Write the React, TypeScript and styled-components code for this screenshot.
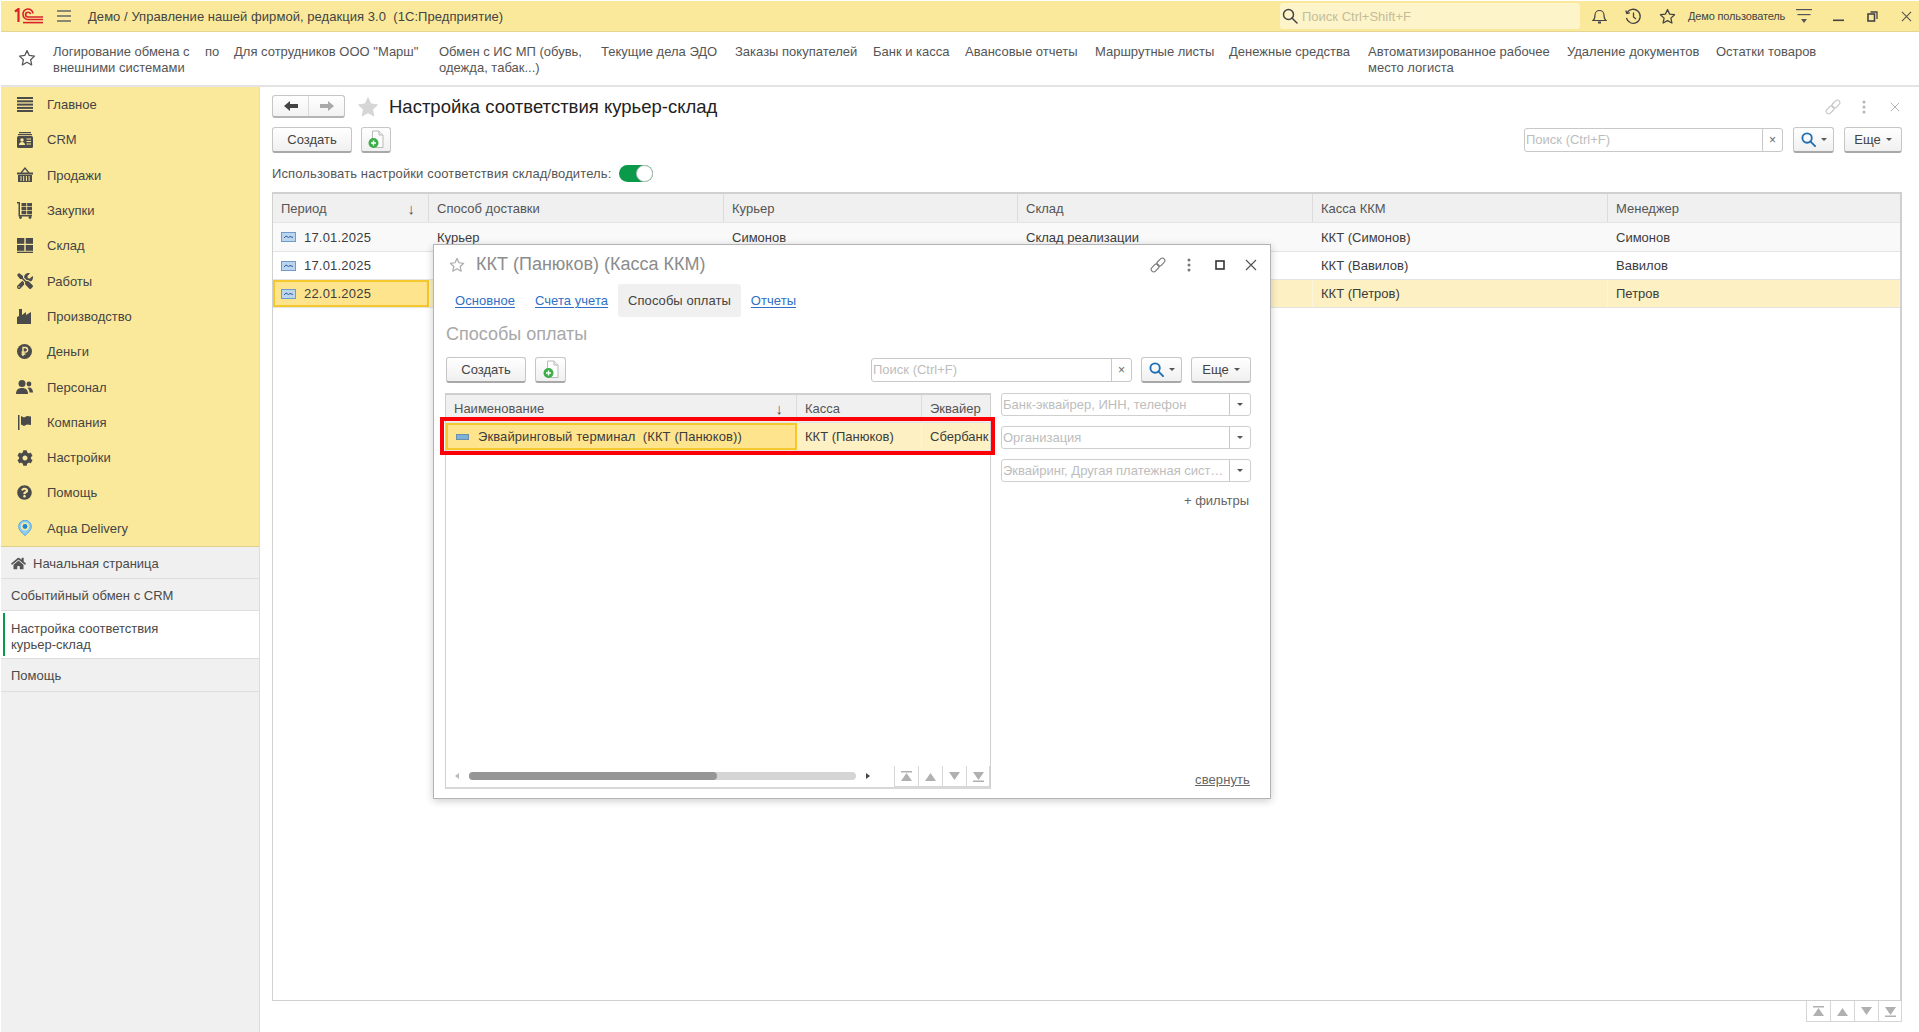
import React from 'react';
import styled, { createGlobalStyle } from 'styled-components';
import { FaCog, FaHome, FaQuestionCircle, FaTools } from 'react-icons/fa';

const Global = createGlobalStyle`
  html, body { margin: 0; padding: 0; height: 100%; background: #fff; overflow: hidden; }
  body { font-family: "Liberation Sans", Arial, sans-serif; font-size: 13px; color: #444; }
  * { box-sizing: border-box; }
`;

const Page = styled.div`
  position: relative;
  display: flex;
  flex-direction: column;
  height: 100vh;
  padding: 1px 0 0 1px;
  overflow: hidden;
`;

const TitleBar = styled.div`
  display: flex;
  align-items: center;
  flex: none;
  height: 31px;
  background: #fbe99b;
  border-bottom: 1px solid #e3d592;
  padding-left: 13px;
`;

const Logo = styled.svg`
  width: 30px;
  height: 16px;
  flex: none;
`;

const Burger = styled.svg`
  width: 14px;
  height: 12px;
  margin: 0 17px 0 13px;
  flex: none;
`;

const AppName = styled.div`
  color: #444;
  white-space: pre;
  letter-spacing: 0.05px;
  flex: 1;
`;

const GlobalSearch = styled.div`
  display: flex;
  align-items: center;
  gap: 4px;
  width: 300px;
  height: 26px;
  padding-left: 2px;
  background: #fdf4c9;
  border-radius: 3px;
  color: #c4bd9a;
  margin-right: 2px;
`;

const BarIcons = styled.div`
  display: flex;
  align-items: center;
  flex: none;
  margin-right: -4px;
  color: #444;
`;

const BarIcon = styled.span`
  display: flex;
  justify-content: center;
  width: 34px;
`;

const UserName = styled.span`
  font-size: 11px;
  letter-spacing: -0.15px;
  width: 103px;
  padding-left: 4px;
  white-space: nowrap;
`;

const QuickBar = styled.div`
  display: flex;
  align-items: flex-start;
  flex: none;
  height: 55px;
  gap: 14px;
  padding: 12px 0 0 17px;
  border-bottom: 2px solid #e4e4e4;
`;

const QuickStar = styled.svg`
  width: 18px;
  height: 18px;
  margin: 5px 3px 0 0;
  flex: none;
`;

const QuickLink = styled.div<{ $w?: number; $wrap?: boolean }>`
  flex: none;
  line-height: 15.5px;
  color: #555;
  width: ${(p) => (p.$w ? `${p.$w}px` : 'auto')};
  white-space: ${(p) => (p.$wrap ? 'normal' : 'nowrap')};
`;

const Body = styled.div`
  display: flex;
  flex: 1;
  min-height: 0;
`;

const Sidebar = styled.nav`
  display: flex;
  flex-direction: column;
  flex: none;
  width: 259px;
  background: #f0f0f0;
  border-right: 1px solid #dcdcdc;
`;

const Sections = styled.div`
  background: #fbe99b;
  border-bottom: 1px solid #ddcf8c;
`;

const SectionItem = styled.div`
  display: flex;
  align-items: center;
  height: 35.3px;
  padding-left: 15px;
  color: #444;
`;

const SectionIcon = styled.span`
  display: flex;
  justify-content: center;
  width: 17px;
  margin-right: 14px;
  color: #4b4b4b;
`;

const OpenItem = styled.div<{ $active?: boolean }>`
  position: relative;
  display: flex;
  align-items: center;
  gap: 7px;
  min-height: 32.3px;
  padding: ${(p) => (p.$active ? '10px 60px 5px 10px' : '2px 10px 0')};
  line-height: 16px;
  background: ${(p) => (p.$active ? '#fff' : 'transparent')};
  border-bottom: 1px solid #dedede;
  color: #4a4a4a;
`;

const ActiveMark = styled.i`
  position: absolute;
  left: 2px;
  top: 2px;
  bottom: 2px;
  width: 2px;
  background: #0a9a4a;
`;

const Content = styled.main`
  display: flex;
  flex-direction: column;
  flex: 1;
  min-width: 0;
  padding: 8px 17px 10px 12px;
`;

const HeaderRow = styled.div`
  display: flex;
  align-items: center;
  height: 23px;
  margin-bottom: 9px;
`;

const NavGroup = styled.div`
  display: flex;
  width: 73px;
  height: 23px;
  border: 1px solid #c6c6c6;
  border-bottom: 2px solid #b4b4b4;
  border-radius: 3px;
  background: linear-gradient(#fff, #f2f2f2);
`;

const NavCell = styled.span<{ $first?: boolean }>`
  display: flex;
  flex: 1;
  align-items: center;
  justify-content: center;
  border-right: ${(p) => (p.$first ? '1px solid #dadada' : 'none')};
`;

const BigStar = styled.svg`
  width: 24px;
  height: 24px;
  margin-left: 11px;
  flex: none;
`;

const PageTitle = styled.h1`
  margin: 0 0 0 9px;
  font-size: 18.5px;
  font-weight: 400;
  color: #222;
  flex: 1;
`;

const ToolGroup = styled.div<{ $mr: number }>`
  display: flex;
  align-items: center;
  margin-right: ${(p) => p.$mr}px;
`;

const ToolCell = styled.span`
  display: flex;
  align-items: center;
  justify-content: center;
  width: 31px;
`;

const Toolbar = styled.div`
  display: flex;
  align-items: center;
  height: 26px;
`;

const Button = styled.button<{ $w: number; $ml?: number }>`
  display: flex;
  align-items: center;
  justify-content: center;
  gap: 5px;
  flex: none;
  width: ${(p) => p.$w}px;
  height: 26px;
  margin-left: ${(p) => p.$ml ?? 0}px;
  padding: 0;
  font: inherit;
  color: #444;
  background: linear-gradient(#fff, #f0f0f0);
  border: 1px solid #c6c6c6;
  border-bottom: 2px solid #a8a8a8;
  border-radius: 3px;
`;

const Caret = styled.i`
  width: 0;
  height: 0;
  border-left: 3px solid transparent;
  border-right: 3px solid transparent;
  border-top: 3px solid #555;
`;

const SearchField = styled.div<{ $w: number }>`
  display: flex;
  width: ${(p) => p.$w}px;
  height: 24px;
  flex: none;
  margin-left: auto;
  background: #fff;
  border: 1px solid #c8c8c8;
  border-radius: 3px;
`;

const Placeholder = styled.span`
  flex: 1;
  min-width: 0;
  padding-left: 1px;
  line-height: 22px;
  color: #bdbdbd;
  white-space: nowrap;
  overflow: hidden;
  text-overflow: ellipsis;
`;

const FieldButton = styled.span<{ $w: number }>`
  display: flex;
  align-items: center;
  justify-content: center;
  flex: none;
  width: ${(p) => p.$w}px;
  border-left: 1px solid #c8c8c8;
  color: #666;
  font-size: 12px;
`;

const SwitchRow = styled.div`
  display: flex;
  align-items: center;
  gap: 8px;
  height: 18px;
  margin: 11px 0 10px;
  color: #555;
  letter-spacing: 0.12px;
`;

const Toggle = styled.span`
  position: relative;
  display: block;
  width: 34px;
  height: 17px;
  border-radius: 9px;
  background: #0a9a4a;
`;

const ToggleKnob = styled.i`
  position: absolute;
  right: 0;
  top: 0;
  width: 17px;
  height: 17px;
  border-radius: 50%;
  background: #fff;
  border: 1px solid #bcbcbc;
`;

const TableBox = styled.div`
  display: flex;
  flex-direction: column;
  flex: 1;
  min-height: 0;
  border: 1px solid #d0d0d0;
  border-top-width: 2px;
  border-left-width: 1px;
  border-right-width: 2px;
`;

const MAIN_COLUMNS = '156px 295px 294px 295px 295px 1fr';
const MODAL_COLUMNS = '351px 125px 1fr';

const Row = styled.div<{ $cols: string; $h: number; $bg?: string }>`
  display: grid;
  grid-template-columns: ${(p) => p.$cols};
  flex: none;
  height: ${(p) => p.$h}px;
  background: ${(p) => p.$bg ?? '#fff'};
  border-bottom: 1px solid #e4e4e4;
`;

const HeadCell = styled.div`
  display: flex;
  align-items: center;
  justify-content: space-between;
  padding: 0 8px;
  color: #555;
  background: #f0f0f0;
  border-right: 1px solid #dcdcdc;
  overflow: hidden;
  &:last-child { border-right: 0; }
`;

const SortArrow = styled.span`
  font-size: 15px;
  margin-right: 5px;
`;

const Cell = styled.div<{ $selected?: boolean; $line?: boolean }>`
  display: flex;
  align-items: center;
  gap: 8px;
  padding: 0 ${(p) => (p.$selected ? 6 : 8)}px;
  color: #3c3c3c;
  white-space: pre;
  overflow: hidden;
  background: ${(p) => (p.$selected ? '#ffe48e' : 'transparent')};
  border: ${(p) => (p.$selected ? '2px solid #f5c92e' : 'none')};
  border-right: ${(p) => (p.$selected ? '2px solid #f5c92e' : p.$line ? '1px solid #fbf5dc' : 'none')};
`;

const DateText = styled.span`
  letter-spacing: 0.2px;
`;

const NameText = styled.span`
  letter-spacing: 0.1px;
`;

const Spacer = styled.div`
  flex: 1;
`;

const Pager = styled.div`
  display: flex;
  flex: none;
`;

const PagerCell = styled.span`
  display: flex;
  align-items: center;
  justify-content: center;
  width: 24px;
  height: 21px;
  border: 1px solid #d6d6d6;
  border-right-width: 0;
  border-top-width: 0;
  &:last-child { border-right-width: 1px; }
`;

const BottomPager = styled.div`
  display: flex;
  justify-content: flex-end;
`;

/* modal */
const Window = styled.section`
  position: absolute;
  left: 433px;
  top: 244px;
  width: 838px;
  height: 555px;
  display: flex;
  flex-direction: column;
  padding: 0 19px 0 12px;
  background: #fff;
  border: 1px solid #b4b4b4;
  box-shadow: 0 2px 8px rgba(0, 0, 0, 0.2);
`;

const WindowHead = styled.div`
  display: flex;
  align-items: center;
  height: 39px;
  padding-left: 3px;
  flex: none;
`;

const WindowTitle = styled.div`
  flex: 1;
  margin-left: 11px;
  font-size: 18px;
  color: #8c8c8c;
`;

const Tabs = styled.div`
  display: flex;
  flex: none;
  height: 33px;
  margin-left: -1px;
`;

const Tab = styled.span<{ $active?: boolean }>`
  display: flex;
  align-items: center;
  padding: 0 10px;
  border-radius: 3px;
  letter-spacing: 0.05px;
  background: ${(p) => (p.$active ? '#f0f0f0' : 'transparent')};
  color: ${(p) => (p.$active ? '#444' : '#2f6fc4')};
  text-decoration: ${(p) => (p.$active ? 'none' : 'underline')};
  text-underline-offset: 2px;
`;

const SubTitle = styled.div`
  flex: none;
  height: 40px;
  line-height: 34px;
  font-size: 18px;
  color: #a8a8a8;
`;

const WindowBody = styled.div`
  display: flex;
  flex: 1;
  min-height: 0;
  gap: 10px;
  margin: 10px 0 9px -1px;
`;

const InnerTable = styled.div`
  position: relative;
  display: flex;
  flex-direction: column;
  flex: none;
  width: 546px;
  border: 1px solid #cfcfcf;
  border-top-width: 2px;
  border-bottom: 2px solid #d8d8d8;
`;

const RedFrame = styled.div`
  position: absolute;
  left: -6px;
  right: -5px;
  top: 22px;
  height: 38px;
  border: 4px solid #fb0007;
  pointer-events: none;
`;

const TableFoot = styled.div`
  display: flex;
  align-items: flex-end;
  flex: none;
  height: 21px;
`;

const ScrollArea = styled.div`
  display: flex;
  align-items: center;
  flex: 1;
  height: 21px;
  padding: 0 24px 2px 9px;
  gap: 10px;
`;

const ScrollTrack = styled.div`
  flex: 1;
  height: 8px;
  border-radius: 4px;
  background: #d5d5d5;
`;

const ScrollThumb = styled.div`
  width: 64%;
  height: 100%;
  border-radius: 4px;
  background: #969696;
`;

const FilterColumn = styled.div`
  display: flex;
  flex-direction: column;
  flex: 1;
  min-width: 0;
  gap: 10px;
`;

const FilterField = styled.div`
  display: flex;
  flex: none;
  height: 23px;
  background: #fff;
  border: 1px solid #cfcfcf;
  border-radius: 3px;
`;

const MoreFilters = styled.div`
  text-align: right;
  padding-right: 2px;
  margin-top: 1px;
  color: #666;
`;

const Collapse = styled.span`
  margin-top: auto;
  margin-bottom: 2px;
  padding-right: 1px;
  align-self: flex-end;
  letter-spacing: 0.1px;
  color: #666;
  text-decoration: underline;
`;

const DashSvg = styled.svg`
  width: 13px;
  height: 6px;
  margin: 0 1px 0 2px;
  flex: none;
`;

/* icons */
const Star = ({ size = 16, color = '#555' }: { size?: number; color?: string }) => (
  <svg width={size} height={size} viewBox="0 0 20 20">
    <path d="M10 1.8l2.5 5.4 5.8.7-4.3 4 1.2 5.8L10 14.8l-5.2 2.9L6 11.9l-4.3-4 5.8-.7z" fill="none" stroke={color} strokeWidth="1.5" strokeLinejoin="round" />
  </svg>
);

const LinkIcon = ({ color = '#777' }: { color?: string }) => (
  <svg width="16" height="16" viewBox="0 0 16 16" fill="none" stroke={color} strokeWidth="1.1">
    <rect x="8.4" y="0.6" width="5" height="9" rx="2.5" transform="rotate(45 10.9 5.1)" />
    <rect x="2.6" y="6.4" width="5" height="9" rx="2.5" transform="rotate(45 5.1 10.9)" />
  </svg>
);

const Dots = ({ color = '#777' }: { color?: string }) => (
  <svg width="4" height="14" viewBox="0 0 4 14" fill={color}>
    <circle cx="2" cy="2" r="1.5" />
    <circle cx="2" cy="7" r="1.5" />
    <circle cx="2" cy="12" r="1.5" />
  </svg>
);

const CloseX = ({ size = 12, color = '#666', w = 1.2 }: { size?: number; color?: string; w?: number }) => (
  <svg width={size} height={size} viewBox="0 0 12 12" stroke={color} strokeWidth={w}>
    <path d="M1 1l10 10M11 1L1 11" />
  </svg>
);

const Loupe = ({ size = 15, color = '#1f6fb2', w = 2 }: { size?: number; color?: string; w?: number }) => (
  <svg width={size} height={size} viewBox="0 0 16 16" fill="none" stroke={color} strokeWidth={w}>
    <circle cx="6.5" cy="6.5" r="5" />
    <path d="M10 10l5 5" strokeLinecap="round" />
  </svg>
);

const NewDoc = () => (
  <svg width="18" height="19" viewBox="0 0 18 19">
    <path d="M5.5 1h6.5l4 4v12.5H5.5z" fill="#fdfdfd" stroke="#b9b9b9" />
    <path d="M12 1v4h4" fill="#eee" stroke="#b9b9b9" />
    <circle cx="6.5" cy="13" r="5" fill="#3cae4a" />
    <path d="M4 13h5M6.5 10.5v5" stroke="#fff" strokeWidth="1.4" />
  </svg>
);

const Arrow = ({ dir, color }: { dir: 'left' | 'right'; color: string }) => (
  <svg width="16" height="12" viewBox="0 0 16 12" fill={color}>
    <path d={dir === 'left' ? 'M1 6l6-5v3h8v4H7v3z' : 'M15 6L9 1v3H1v4h8v3z'} />
  </svg>
);

const PeriodIcon = () => (
  <svg width="15" height="10" viewBox="0 0 15 10">
    <rect x="0.5" y="0.5" width="14" height="9" fill="#bcd5ee" stroke="#6f9bc8" />
    <path d="M3 6l2-2 2.5 1.5L9 4.5l3 1" fill="none" stroke="#2e5f96" />
  </svg>
);

const PagerIcon = ({ kind }: { kind: 'first' | 'up' | 'down' | 'last' }) => {
  const up = kind === 'first' || kind === 'up';
  const bar = kind === 'first' || kind === 'last';
  return (
    <svg width="13" height="11" viewBox="0 0 13 11" fill="#b0b0b0">
      {bar && <rect x="1" y={up ? 0 : 9.5} width="11" height="1.5" />}
      <path d={up ? 'M6.5 2L12 10H1z' : 'M6.5 9L12 1H1z'} />
    </svg>
  );
};

const LinesIcon = () => (
  <svg width="16" height="15" viewBox="0 0 16 15" fill="#4b4b4b">
    <rect y="0" width="16" height="2" /><rect y="3.3" width="16" height="2" /><rect y="6.6" width="16" height="2" />
    <rect y="9.9" width="16" height="2" /><rect y="13" width="16" height="2" />
  </svg>
);

const CrmIcon = () => (
  <svg width="16" height="16" viewBox="0 0 16 16">
    <path d="M2 0h12v1.2H2zM1 2h14v1.2H1z" fill="#4b4b4b" />
    <rect y="4" width="16" height="12" rx="1.5" fill="#4b4b4b" />
    <circle cx="5" cy="8" r="1.7" fill="#fbe99b" />
    <path d="M2 13c0-2 1.5-3 3-3s3 1 3 3z" fill="#fbe99b" />
    <path d="M9.5 7h4.5M9.5 9.5h4.5M9.5 12h4.5" stroke="#fbe99b" />
  </svg>
);

const BasketIcon = () => (
  <svg width="16" height="16" viewBox="0 0 16 16">
    <path d="M4 6l4-5 4 5" fill="none" stroke="#4b4b4b" strokeWidth="1.3" />
    <rect y="5.5" width="16" height="2" fill="#4b4b4b" />
    <path d="M1 8h14v7H1z" fill="#4b4b4b" />
    <path d="M4 9v5M6.7 9v5M9.4 9v5M12.1 9v5" stroke="#fbe99b" />
  </svg>
);

const CartIcon = () => (
  <svg width="16" height="17" viewBox="0 0 16 17" fill="#4b4b4b">
    <path d="M0 0h3v13h12v1.5H1.5V1.5H0z" />
    <rect x="4.5" y="1" width="4.8" height="3.3" /><rect x="10.2" y="1" width="4.8" height="3.3" />
    <rect x="4.5" y="5" width="4.8" height="3.3" /><rect x="10.2" y="5" width="4.8" height="3.3" />
    <rect x="4.5" y="9" width="4.8" height="3.3" /><rect x="10.2" y="9" width="4.8" height="3.3" />
    <circle cx="3.5" cy="15.5" r="1.4" /><circle cx="13" cy="15.5" r="1.4" />
  </svg>
);

const StockIcon = () => (
  <svg width="16" height="15" viewBox="0 0 16 15" fill="#4b4b4b">
    <rect width="7.3" height="5.8" /><rect x="8.7" width="7.3" height="5.8" />
    <rect y="7" width="7.3" height="5.8" /><rect x="8.7" y="7" width="7.3" height="5.8" />
    <rect y="13.7" width="16" height="1.3" />
  </svg>
);

const FactoryIcon = () => (
  <svg width="15" height="16" viewBox="0 0 15 16" fill="#4b4b4b">
    <path d="M0 16V9l2-1V1h3v6l4-3v3l5-3v12z" />
  </svg>
);

const RubleIcon = () => (
  <svg width="15" height="15" viewBox="0 0 15 15">
    <circle cx="7.5" cy="7.5" r="7.5" fill="#4b4b4b" />
    <path d="M6 12V3.5h2.3a2.2 2.2 0 010 4.6H4.5M4.5 10h4" fill="none" stroke="#fbe99b" strokeWidth="1.4" />
  </svg>
);

const PeopleIcon = () => (
  <svg width="17" height="14" viewBox="0 0 17 14" fill="#4b4b4b">
    <circle cx="6" cy="3.5" r="3.5" />
    <path d="M0 14c0-4 2-6 6-6s6 2 6 6z" />
    <circle cx="13" cy="4" r="2.4" />
    <path d="M13 7.5c2.5 0 4 2 4 5h-3.5c0-2-.8-3.5-2-4.5.4-.3 1-.5 1.5-.5z" />
  </svg>
);

const FlagIcon = () => (
  <svg width="14" height="15" viewBox="0 0 14 15" fill="#4b4b4b">
    <rect width="1.5" height="15" />
    <path d="M3 1l3 1.5L9 1l4 .5V10l-4-.5L6 11 3 9.5z" />
  </svg>
);

const PinIcon = () => (
  <svg width="14" height="16" viewBox="0 0 14 16">
    <path d="M7 15.5C3 12 .7 9.5.7 6.5a6.3 6.3 0 0112.6 0c0 3-2.3 5.5-6.3 9z" fill="#8fcdf4" stroke="#4ba3e3" />
    <circle cx="7" cy="6.5" r="4" fill="#fbe99b" />
    <circle cx="7" cy="6.5" r="2.4" fill="#1c86dc" />
  </svg>
);

const sections: [string, React.ReactNode][] = [
  ['Главное', <LinesIcon />],
  ['CRM', <CrmIcon />],
  ['Продажи', <BasketIcon />],
  ['Закупки', <CartIcon />],
  ['Склад', <StockIcon />],
  ['Работы', <FaTools size={16} />],
  ['Производство', <FactoryIcon />],
  ['Деньги', <RubleIcon />],
  ['Персонал', <PeopleIcon />],
  ['Компания', <FlagIcon />],
  ['Настройки', <FaCog size={16} />],
  ['Помощь', <FaQuestionCircle size={15} />],
  ['Aqua Delivery', <PinIcon />],
];

const quickLinks: { text: string; w?: number; wrap?: boolean }[] = [
  { text: 'Логирование обмена с внешними системами', w: 138, wrap: true },
  { text: 'по', w: 15 },
  { text: 'Для сотрудников ООО "Марш"', w: 191 },
  { text: 'Обмен с ИС МП (обувь, одежда, табак...)', w: 148, wrap: true },
  { text: 'Текущие дела ЭДО', w: 120 },
  { text: 'Заказы покупателей', w: 124 },
  { text: 'Банк и касса', w: 78 },
  { text: 'Авансовые отчеты', w: 116 },
  { text: 'Маршрутные листы', w: 120 },
  { text: 'Денежные средства', w: 125 },
  { text: 'Автоматизированное рабочее место логиста', w: 185, wrap: true },
  { text: 'Удаление документов', w: 135 },
  { text: 'Остатки товаров' },
];

const mainRows = [
  { date: '17.01.2025', cells: ['Курьер', 'Симонов', 'Склад реализации', 'ККТ (Симонов)', 'Симонов'], h: 29, bg: '#f9f9f9' },
  { date: '17.01.2025', cells: ['Курьер', 'Вавилов', 'Склад реализации', 'ККТ (Вавилов)', 'Вавилов'], h: 28 },
  { date: '22.01.2025', cells: ['Курьер', 'Петров', 'Склад реализации', 'ККТ (Петров)', 'Петров'], h: 28, bg: '#fdf1c3', selected: true },
];

const filterFields = ['Банк-эквайрер, ИНН, телефон', 'Организация', 'Эквайринг, Другая платежная система'];
const pagerKinds = ['first', 'up', 'down', 'last'] as const;

const Pagers = () => (
  <Pager>
    {pagerKinds.map((k) => (
      <PagerCell key={k}>
        <PagerIcon kind={k} />
      </PagerCell>
    ))}
  </Pager>
);

const App: React.FC = () => (
  <Page>
    <Global />
    <TitleBar>
      <Logo viewBox="0 0 30 16">
        <g fill="none" stroke="#d8232a" strokeWidth="1.6">
          <path d="M1 3.5L4.5 1v13" strokeWidth="2.2" />
          <path d="M19 5.5A5 5 0 009 6.5a5 5 0 005 5h15" />
          <path d="M16.5 6.2A2.4 2.4 0 0014 4.2a2.4 2.4 0 000 4.8h15" />
          <path d="M9 14.6h20" />
        </g>
      </Logo>
      <Burger viewBox="0 0 14 12" stroke="#666" strokeWidth="1.3">
        <path d="M0 1h14M0 6h14M0 11h14" />
      </Burger>
      <AppName>Демо / Управление нашей фирмой, редакция 3.0  (1С:Предприятие)</AppName>
      <GlobalSearch>
        <Loupe size={16} color="#444" w={1.5} />
        Поиск Ctrl+Shift+F
      </GlobalSearch>
      <BarIcons>
        <BarIcon>
          <svg width="15" height="18" viewBox="0 0 15 18" fill="none" stroke="#444" strokeWidth="1.2">
            <path d="M1 13.5c1.5-1 2-2 2-5.5a4.5 4.5 0 019 0c0 3.5.5 4.5 2 5.5z" />
            <path d="M6 15.5h3" strokeWidth="2" />
          </svg>
        </BarIcon>
        <BarIcon>
          <svg width="17" height="17" viewBox="0 0 17 17" fill="none" stroke="#444" strokeWidth="1.3">
            <path d="M2 5a7 7 0 11-.6 5" />
            <path d="M.8 2.5l1 3 3-.6" />
            <path d="M8.5 4.5v4.5l2.5 2" />
          </svg>
        </BarIcon>
        <BarIcon>
          <Star size={17} color="#444" />
        </BarIcon>
        <UserName>Демо пользователь</UserName>
        <BarIcon>
          <svg width="16" height="15" viewBox="0 0 16 15" fill="#555">
            <rect width="16" height="1.2" />
            <rect x="1.5" y="5" width="13" height="1.2" />
            <path d="M5 10h6l-3 4z" />
          </svg>
        </BarIcon>
        <BarIcon>
          <svg width="11" height="12" viewBox="0 0 11 12" fill="#444">
            <rect y="9.5" width="11" height="1.6" />
          </svg>
        </BarIcon>
        <BarIcon>
          <svg width="11" height="11" viewBox="0 0 11 11" fill="none" stroke="#444" strokeWidth="1.3">
            <rect x="1" y="3" width="6.5" height="7" strokeWidth="1.6" />
            <path d="M3.5 1h6.5v7" />
          </svg>
        </BarIcon>
        <BarIcon>
          <CloseX size={11} color="#555" />
        </BarIcon>
      </BarIcons>
    </TitleBar>

    <QuickBar>
      <QuickStar viewBox="0 0 20 20">
        <path d="M10 1.8l2.5 5.4 5.8.7-4.3 4 1.2 5.8L10 14.8l-5.2 2.9L6 11.9l-4.3-4 5.8-.7z" fill="none" stroke="#555" strokeWidth="1.4" strokeLinejoin="round" />
      </QuickStar>
      {quickLinks.map((q) => (
        <QuickLink key={q.text} $w={q.w} $wrap={q.wrap}>
          {q.text}
        </QuickLink>
      ))}
    </QuickBar>

    <Body>
      <Sidebar>
        <Sections>
          {sections.map(([name, icon]) => (
            <SectionItem key={name}>
              <SectionIcon>{icon}</SectionIcon>
              {name}
            </SectionItem>
          ))}
        </Sections>
        <OpenItem>
          <FaHome size={15} color="#555" />
          Начальная страница
        </OpenItem>
        <OpenItem>Событийный обмен с CRM</OpenItem>
        <OpenItem $active>
          <ActiveMark />
          Настройка соответствия курьер-склад
        </OpenItem>
        <OpenItem>Помощь</OpenItem>
      </Sidebar>

      <Content>
        <HeaderRow>
          <NavGroup>
            <NavCell $first>
              <Arrow dir="left" color="#444" />
            </NavCell>
            <NavCell>
              <Arrow dir="right" color="#a9a9a9" />
            </NavCell>
          </NavGroup>
          <BigStar viewBox="0 0 20 20">
            <path d="M10 1.5l2.6 5.6 6 .8-4.4 4.2 1.2 6L10 15.2l-5.4 2.9 1.2-6L1.4 7.9l6-.8z" fill="#d6d6d6" />
          </BigStar>
          <PageTitle>Настройка соответствия курьер-склад</PageTitle>
          <ToolGroup $mr={-8}>
            <ToolCell>
              <LinkIcon color="#c4c4c4" />
            </ToolCell>
            <ToolCell>
              <Dots color="#b5b5b5" />
            </ToolCell>
            <ToolCell>
              <CloseX size={10} color="#b5b5b5" />
            </ToolCell>
          </ToolGroup>
        </HeaderRow>

        <Toolbar>
          <Button $w={80}>Создать</Button>
          <Button $w={30} $ml={9}>
            <NewDoc />
          </Button>
          <SearchField $w={259}>
            <Placeholder>Поиск (Ctrl+F)</Placeholder>
            <FieldButton $w={20}>×</FieldButton>
          </SearchField>
          <Button $w={41} $ml={10}>
            <Loupe />
            <Caret />
          </Button>
          <Button $w={58} $ml={10}>
            Еще
            <Caret />
          </Button>
        </Toolbar>

        <SwitchRow>
          Использовать настройки соответствия склад/водитель:
          <Toggle>
            <ToggleKnob />
          </Toggle>
        </SwitchRow>

        <TableBox>
          <Row $cols={MAIN_COLUMNS} $h={29}>
            <HeadCell>
              Период
              <SortArrow>↓</SortArrow>
            </HeadCell>
            <HeadCell>Способ доставки</HeadCell>
            <HeadCell>Курьер</HeadCell>
            <HeadCell>Склад</HeadCell>
            <HeadCell>Касса ККМ</HeadCell>
            <HeadCell>Менеджер</HeadCell>
          </Row>
          {mainRows.map((row) => (
            <Row key={row.date + row.cells[1]} $cols={MAIN_COLUMNS} $h={row.h} $bg={row.bg}>
              <Cell $selected={row.selected}>
                <PeriodIcon />
                <DateText>{row.date}</DateText>
              </Cell>
              {row.cells.map((c) => (
                <Cell key={c} $line={row.selected}>
                  {c}
                </Cell>
              ))}
            </Row>
          ))}
          <Spacer />
        </TableBox>
        <BottomPager>
          <Pagers />
        </BottomPager>
      </Content>
    </Body>

    <Window>
      <WindowHead>
        <Star size={16} color="#aaa" />
        <WindowTitle>ККТ (Панюков) (Касса ККМ)</WindowTitle>
        <ToolGroup $mr={-15}>
          <ToolCell>
            <LinkIcon color="#777" />
          </ToolCell>
          <ToolCell>
            <Dots color="#777" />
          </ToolCell>
          <ToolCell>
            <svg width="12" height="12" viewBox="0 0 12 12" fill="none" stroke="#333" strokeWidth="1.6">
              <rect x="2" y="2" width="8" height="8" />
            </svg>
          </ToolCell>
          <ToolCell>
            <CloseX size={12} color="#555" />
          </ToolCell>
        </ToolGroup>
      </WindowHead>
      <Tabs>
        <Tab>Основное</Tab>
        <Tab>Счета учета</Tab>
        <Tab $active>Способы оплаты</Tab>
        <Tab>Отчеты</Tab>
      </Tabs>
      <SubTitle>Способы оплаты</SubTitle>
      <Toolbar>
        <Button $w={80}>Создать</Button>
        <Button $w={31} $ml={9}>
          <NewDoc />
        </Button>
        <SearchField $w={261}>
          <Placeholder>Поиск (Ctrl+F)</Placeholder>
          <FieldButton $w={20}>×</FieldButton>
        </SearchField>
        <Button $w={41} $ml={9}>
          <Loupe />
          <Caret />
        </Button>
        <Button $w={60} $ml={9}>
          Еще
          <Caret />
        </Button>
      </Toolbar>
      <WindowBody>
        <InnerTable>
          <Row $cols={MODAL_COLUMNS} $h={28}>
            <HeadCell>
              Наименование
              <SortArrow>↓</SortArrow>
            </HeadCell>
            <HeadCell>Касса</HeadCell>
            <HeadCell>Эквайер</HeadCell>
          </Row>
          <Row $cols={MODAL_COLUMNS} $h={28} $bg="#fdf1c3">
            <Cell $selected>
              <DashSvg viewBox="0 0 13 6">
                <rect x="0.5" y="0.5" width="12" height="5" fill="#7fb0d8" stroke="#6a8fa8" />
              </DashSvg>
              <NameText>Эквайринговый терминал  (ККТ (Панюков))</NameText>
            </Cell>
            <Cell $line>ККТ (Панюков)</Cell>
            <Cell>Сбербанк</Cell>
          </Row>
          <RedFrame />
          <Spacer />
          <TableFoot>
            <ScrollArea>
              <svg width="4" height="6" viewBox="0 0 4 6" fill="#bbb">
                <path d="M4 0v6L0 3z" />
              </svg>
              <ScrollTrack>
                <ScrollThumb />
              </ScrollTrack>
              <svg width="4" height="6" viewBox="0 0 4 6" fill="#444">
                <path d="M0 0v6l4-3z" />
              </svg>
            </ScrollArea>
            <Pagers />
          </TableFoot>
        </InnerTable>
        <FilterColumn>
          {filterFields.map((f) => (
            <FilterField key={f}>
              <Placeholder>{f}</Placeholder>
              <FieldButton $w={21}>
                <Caret />
              </FieldButton>
            </FilterField>
          ))}
          <MoreFilters>+ фильтры</MoreFilters>
          <Collapse>свернуть</Collapse>
        </FilterColumn>
      </WindowBody>
    </Window>
  </Page>
);

export default App;
